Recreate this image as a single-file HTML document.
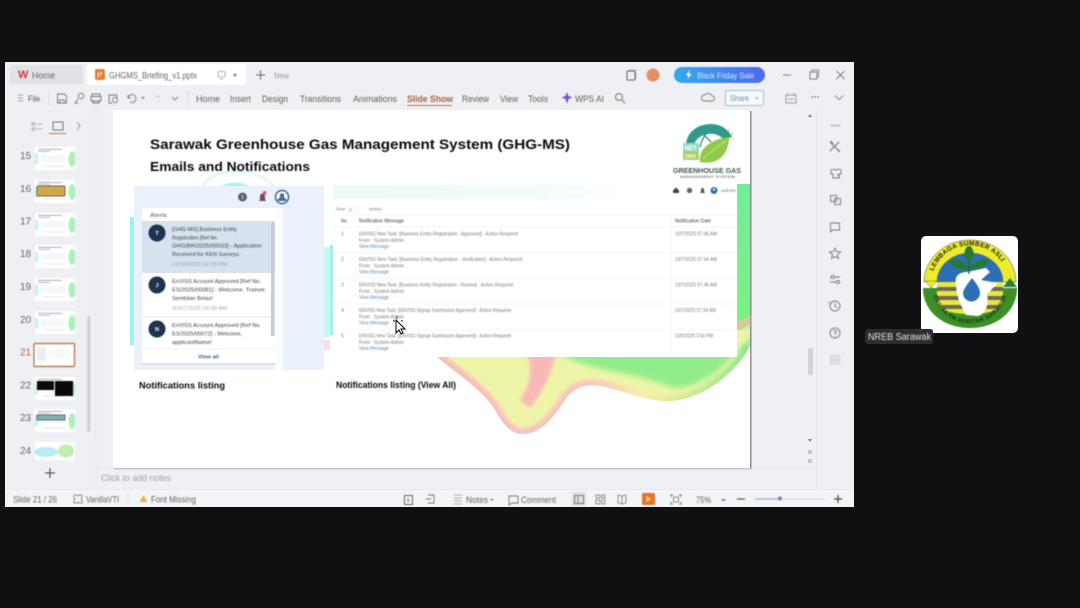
<!DOCTYPE html>
<html><head><meta charset="utf-8"><style>
html,body{margin:0;padding:0;background:#101012;width:1080px;height:608px;overflow:hidden}
svg{display:block;font-family:"Liberation Sans",sans-serif}
.s{filter:blur(.45px)}.b{filter:blur(.6px)}
</style></head><body>
<svg width="1080" height="608" viewBox="0 0 1080 608" xmlns="http://www.w3.org/2000/svg">
<defs>
<linearGradient id="pill" x1="0" x2="1"><stop offset="0" stop-color="#35a7f2"/><stop offset="1" stop-color="#4d6bea"/></linearGradient>
<linearGradient id="edge" gradientUnits="userSpaceOnUse" x1="437" x2="750" y1="0" y2="0"><stop offset="0" stop-color="#f9bcbf"/><stop offset=".5" stop-color="#fac6c0"/><stop offset=".66" stop-color="#f6efaa"/><stop offset=".78" stop-color="#d8eb9a"/><stop offset="1" stop-color="#8ee98e"/></linearGradient>
<linearGradient id="gr" x1="0" x2="0" y1="0" y2="1"><stop offset="0" stop-color="#70ee98"/><stop offset="1" stop-color="#7ff07c"/></linearGradient>
<linearGradient id="mint" x1="0" x2="1"><stop offset="0" stop-color="#eefaf7"/><stop offset=".7" stop-color="#f3fbf9"/><stop offset="1" stop-color="#ffffff"/></linearGradient>
<filter id="bl" x="-20%" y="-20%" width="140%" height="140%"><feGaussianBlur stdDeviation="3"/></filter>
<filter id="bl1" x="-20%" y="-20%" width="140%" height="140%"><feGaussianBlur stdDeviation=".7"/></filter>
<filter id="bl2" x="-20%" y="-20%" width="140%" height="140%"><feGaussianBlur stdDeviation="1.800"/></filter>
<clipPath id="wclip"><path d="M437 357C455 372 485 392 495 410C503 425 512 434 522 434C540 434 552 420 565 400C575 385 590 383 605 387C630 393 650 402 670 401C700 400 735 375 750 346V330H737V357z"/></clipPath>
<symbol id="th" viewBox="0 0 40 23"><rect width="40" height="23" fill="#fff"/><rect x="3" y="2" width="24" height=".8" fill="#99a"/><rect x="3" y="4" width="12" height=".8" fill="#aab"/><ellipse cx="37" cy="12" rx="3.500" ry="8" fill="#aef0bc"/><rect x="6" y="8" width="24" height="7" fill="#f5f8f9"/><ellipse cx="1.500" cy="12" rx="1.800" ry="6" fill="#c4f3f0"/><path d="M8 19h22" stroke="#dde" stroke-width=".7"/></symbol>
<path id="arcT" d="M933 272A39 39 0 0 1 1007 272"/>
<path id="arcB" d="M933 294A38 38 0 0 0 1007 294"/>
</defs>

<rect width="1080" height="608" fill="#101012"/>
<rect x="5" y="62" width="849" height="445" fill="#eef0f4"/>

<!-- title bar -->
<g class="s">
<rect x="10" y="65" width="73" height="19" rx="3" fill="#e0e2e7"/>
<text x="18" y="78" font-size="11" font-weight="bold" fill="#d93a3a">W</text>
<text x="32" y="78.500" font-size="9" fill="#666" textLength="23" lengthAdjust="spacingAndGlyphs">Home</text>
<rect x="87" y="64" width="159" height="21" rx="3" fill="#fff"/>
<rect x="95" y="69" width="10" height="11" rx="2" fill="#e07f33"/><text x="97" y="78" font-size="8" fill="#fff">P</text>
<text x="109" y="78.500" font-size="9" fill="#666" textLength="88" lengthAdjust="spacingAndGlyphs">GHGMS_Briefing_v1.pptx</text>
<rect x="218" y="71.500" width="7" height="5.500" rx="1" fill="none" stroke="#999" stroke-width=".8"/><path d="M220 79h3" stroke="#999" stroke-width=".8"/>
<circle cx="235" cy="75" r="1.500" fill="#888"/>
<path d="M256 75h9M260.500 70.500v9" stroke="#666" stroke-width="1"/>
<text x="274" y="78.500" font-size="8.500" fill="#999" textLength="15" lengthAdjust="spacingAndGlyphs">New</text>
<rect x="627" y="71" width="8" height="9" rx="1" fill="none" stroke="#666" stroke-width="1"/><path d="M629 70h7v9" fill="none" stroke="#aaa" stroke-width=".7"/>
<circle cx="653" cy="75" r="6.500" fill="#e78f62"/>
<rect x="674" y="67" width="91" height="16" rx="8" fill="url(#pill)"/>
<path d="M689.500 70l-3.500 5.500h2.500l-1 4 4-5.500h-2.500z" fill="#fff"/>
<text x="697" y="78.500" font-size="8.500" fill="#d4e6fb" textLength="57" lengthAdjust="spacingAndGlyphs">Black Friday Sale</text>
<path d="M783 75h8" stroke="#777" stroke-width=".9"/>
<rect x="810" y="72" width="7" height="7" fill="none" stroke="#777" stroke-width=".9"/><path d="M812 72v-2h6.500v7h-1.500" fill="none" stroke="#777" stroke-width=".8"/>
<path d="M836.500 71l8 8M844.500 71l-8 8" stroke="#777" stroke-width=".9"/>
</g>

<!-- ribbon -->
<g class="s" fill="#555">
<path d="M18 95h5M18 98h5M18 101h5" stroke="#888" stroke-width=".8"/>
<text x="28" y="101.500" font-size="8.500" textLength="12" lengthAdjust="spacingAndGlyphs">File</text>
<path d="M49 92v14" stroke="#dcdde0"/>
<path d="M57.500 94h7l2 2v7h-9zM59.500 103v-3h5v3" fill="none" stroke="#777" stroke-width=".9"/>
<circle cx="81" cy="96" r="2.800" fill="none" stroke="#777" stroke-width=".9"/><path d="M78 99l-3 4h3" fill="none" stroke="#777" stroke-width=".9"/>
<path d="M92 96v-2h8v2M91 96.500h10v4.500h-10zM93 100v3h6v-3" fill="none" stroke="#777" stroke-width=".9"/>
<path d="M109 95h8v3M109 95v8h3" fill="none" stroke="#777" stroke-width=".9"/><circle cx="115" cy="100" r="2.500" fill="none" stroke="#777" stroke-width=".9"/>
<path d="M128 98a4 4 0 1 1 2 4M128 95v3h3" fill="none" stroke="#777" stroke-width=".9"/><path d="M141 97l2 2 2-2z" fill="#777"/>
<path d="M160 98a3 3 0 0 0-5-1" fill="none" stroke="#c4c4c4"/>
<path d="M172 97l3 3 3-3" fill="none" stroke="#888"/>
<path d="M188 90v15" stroke="#dcdde0"/>
<g font-size="9.500" fill="#5f5f5f">
<text x="196" y="102" textLength="24" lengthAdjust="spacingAndGlyphs">Home</text>
<text x="230" y="102" textLength="21" lengthAdjust="spacingAndGlyphs">Insert</text>
<text x="262" y="102" textLength="26" lengthAdjust="spacingAndGlyphs">Design</text>
<text x="300" y="102" textLength="41" lengthAdjust="spacingAndGlyphs">Transitions</text>
<text x="353" y="102" textLength="44" lengthAdjust="spacingAndGlyphs">Animations</text>
<text x="407" y="102" textLength="46" lengthAdjust="spacingAndGlyphs" font-weight="bold" fill="#a8623c">Slide Show</text>
<text x="462" y="102" textLength="27" lengthAdjust="spacingAndGlyphs">Review</text>
<text x="500" y="102" textLength="18" lengthAdjust="spacingAndGlyphs">View</text>
<text x="528" y="102" textLength="20" lengthAdjust="spacingAndGlyphs">Tools</text>
<text x="575" y="102" textLength="29" lengthAdjust="spacingAndGlyphs">WPS AI</text>
</g>
<rect x="407" y="105" width="45" height="1" fill="#c8764a"/>
<path d="M567 92l1.500 4 4 1.500-4 1.500-1.500 5-1.500-5-4-1.500 4-1.500z" fill="#7a4fd0"/>
<circle cx="619" cy="97" r="3.500" fill="none" stroke="#777"/><path d="M622 100l3 3" stroke="#777"/>
<path d="M704 101h8a2.500 2.500 0 0 0 0-5 4 4 0 0 0-7-1 3 3 0 0 0-1 6z" fill="none" stroke="#777" stroke-width=".9"/>
<rect x="725.500" y="90.500" width="38" height="15" rx="1.500" fill="#f6f8fa" stroke="#9fc3d9"/>
<text x="730" y="101" font-size="8.500" fill="#6a93ad" textLength="19" lengthAdjust="spacingAndGlyphs">Share</text><path d="M755 97.500l2 2 2-2z" fill="#8aa"/>
<rect x="786" y="95" width="10" height="8" fill="none" stroke="#888" stroke-width=".8"/><path d="M788 93v2M794 93v2M788 99h6" stroke="#888" stroke-width=".8"/>
<circle cx="812" cy="97" r=".7"/><circle cx="815" cy="97" r=".7"/><circle cx="818" cy="97" r=".7"/>
<path d="M834.500 95.500l4.500 4 4.500-4" fill="none" stroke="#888"/>
</g>

<!-- panes -->
<path d="M96 108v382M817 108v382" stroke="#e5e6ea" fill="none"/>
<path d="M96 468h721M5 490h849" stroke="#e2e3e7"/>
<rect x="5" y="490" width="849" height="17" fill="#f3f4f7"/>

<!-- left sidebar -->
<g class="s">
<path d="M32 123h3v2h-3zM32 128h3v2h-3zM37 124h5M37 129h5" fill="none" stroke="#999" stroke-width=".8"/>
<rect x="53" y="122" width="10" height="8" fill="none" stroke="#777"/>
<rect x="49" y="133" width="17" height="1" fill="#c8764a"/>
<path d="M77 122l3 4-3 4" fill="none" stroke="#999"/>
<g font-size="10" fill="#666">
<text x="20" y="159">15</text><text x="20" y="192">16</text><text x="20" y="224.500">17</text><text x="20" y="257">18</text><text x="20" y="290">19</text><text x="20" y="323">20</text>
<text x="20" y="355.500" fill="#b0673f">21</text><text x="20" y="388.500">22</text><text x="20" y="421">23</text><text x="20" y="454">24</text>
</g>
<use href="#th" x="35" y="147" width="40" height="23"/>
<use href="#th" x="35" y="180" width="40" height="23"/><rect x="37" y="186" width="28" height="10" rx="1" fill="#cfa84e" stroke="#6a6a4a"/>
<use href="#th" x="35" y="213" width="40" height="23"/>
<use href="#th" x="35" y="245" width="40" height="23"/>
<use href="#th" x="35" y="278" width="40" height="23"/>
<use href="#th" x="35" y="311" width="40" height="23"/>
<rect x="34" y="343.500" width="40.500" height="23" rx="1" fill="#fff" stroke="#c07c50" stroke-width="1.400"/>
<rect x="37" y="347" width="9" height="14" fill="#e6eef8"/><rect x="49" y="348" width="22" height="10" fill="#f7f8f8"/>
<use href="#th" x="35" y="377" width="40" height="23"/><rect x="37" y="381" width="17" height="9" fill="#0a0a0a"/><rect x="55" y="381" width="18" height="15" fill="#0a0a0a"/>
<use href="#th" x="35" y="409" width="40" height="23"/><rect x="37" y="415" width="28" height="5" fill="#7fb5a8" stroke="#667"/>
<rect x="35" y="442" width="40" height="18" fill="#fff"/><ellipse cx="46" cy="452" rx="12" ry="5" fill="#b4eef0"/><ellipse cx="66" cy="451" rx="8" ry="6.500" fill="#bff0ad"/>
<rect x="87" y="316" width="3.500" height="116" rx="1.500" fill="#d2d3d7"/>
<path d="M45 473h10M50 468v10" stroke="#555" stroke-width="1.200"/>
</g>

<!-- notes & status -->
<g class="s">
<text x="101" y="481" font-size="9.500" fill="#a2a2a2" textLength="70" lengthAdjust="spacingAndGlyphs">Click to add notes</text>
<g font-size="9" fill="#666">
<text x="13" y="502.500" textLength="44" lengthAdjust="spacingAndGlyphs">Slide 21 / 26</text>
<text x="86" y="502.500" textLength="33" lengthAdjust="spacingAndGlyphs">VanillaVTI</text>
<text x="151" y="502.500" textLength="45" lengthAdjust="spacingAndGlyphs">Font Missing</text>
<text x="466" y="503" textLength="22" lengthAdjust="spacingAndGlyphs">Notes</text>
<text x="521" y="503" textLength="35" lengthAdjust="spacingAndGlyphs">Comment</text>
<text x="696" y="503" textLength="15" lengthAdjust="spacingAndGlyphs">75%</text>
</g>
<path d="M74 495h3l1 1 1-1h3v3l-1 1 1 1v3h-3l-1-1-1 1h-3v-3l1-1-1-1z" fill="none" stroke="#777" stroke-width=".8"/>
<path d="M128 493v12" stroke="#e6dada"/>
<path d="M143.500 495l4 7h-8z" fill="#e9b44c"/>
<rect x="404.500" y="495.500" width="8" height="9" fill="none" stroke="#666"/><path d="M408 498v3h2" fill="none" stroke="#666" stroke-width=".8"/>
<path d="M428 495h6v8h-6M426 499h5" fill="none" stroke="#777" stroke-width=".9"/>
<path d="M454 495h8M454 498h8M454 501h8M454 504h8" stroke="#999" stroke-width=".7"/><path d="M490 499l2 2 2-2z" fill="#777"/>
<path d="M509 496h9v7h-6l-3 2z" fill="none" stroke="#777" stroke-width=".9"/>
<rect x="572" y="492" width="14" height="14" fill="#e0e1e5"/>
<rect x="574.500" y="495.500" width="9" height="8" fill="none" stroke="#777"/><path d="M578 495v8" stroke="#777" stroke-width=".8"/>
<path d="M596 495h4v3h-4zM602 495h3v3h-3zM596 500h4v4h-4zM602 500h3v4h-3z" fill="none" stroke="#777" stroke-width=".8"/>
<path d="M618 495l4 1 4-1v8l-4 1-4-1zM622 496v8" fill="none" stroke="#777" stroke-width=".8"/>
<rect x="642" y="493" width="13" height="12" rx="1.500" fill="#e8732b"/><path d="M646.500 496l4.500 3-4.500 3z" fill="#ffe28a"/>
<path d="M671 497v-2h2M679 495h2v2M681 502v2h-2M673 504h-2v-2" fill="none" stroke="#777"/><rect x="673.500" y="497" width="5" height="5" fill="none" stroke="#777" stroke-width=".8"/>
<path d="M721 499l2.500 2.500 2.500-2.500z" fill="#777"/>
<path d="M737 499h8" stroke="#555" stroke-width="1.200"/>
<path d="M755 499h70" stroke="#d5d6da"/><path d="M755 499h25" stroke="#8fb1c6" stroke-width="1.200"/><circle cx="780" cy="498.500" r="2" fill="#888"/>
<path d="M834 499h8M838 495v8" stroke="#444" stroke-width="1.200"/>
</g>

<!-- right rail -->
<g class="s" fill="none" stroke="#777" stroke-width=".9">
<path d="M830 125.500h10" stroke="#999"/>
<path d="M830 142l9 9M839 142l-9 9M831 141l2 3M838 152l2-2" stroke-width="1.200"/>
<path d="M831 170l3-1 1 1h2l1-1 3 1v4h-2v4h-6v-4h-2zM837 174l3 4"/>
<rect x="830.500" y="195.500" width="6" height="6"/><rect x="834.500" y="198.500" width="6" height="6"/>
<path d="M830.500 223h9v7h-7l-2 2z"/>
<path d="M835 248l1.500 3.500 4 .5-3 2.500 1 4-3.500-2-3.500 2 1-4-3-2.500 4-.5z"/>
<path d="M830 277h10M830 282h10"/><circle cx="833" cy="277" r="1.600" fill="#eef0f4"/><circle cx="838" cy="282" r="1.600" fill="#eef0f4"/>
<circle cx="835" cy="306" r="5"/><path d="M835 303v3l2 2M830 303l-1.500-1"/>
<circle cx="835" cy="333" r="5"/><path d="M833.500 331.500a1.500 1.500 0 1 1 1.500 2v1M835 336v.6"/>
<g stroke="#c8c9ce"><rect x="830.500" y="355.500" width="3.500" height="3.500"/><rect x="836" y="355.500" width="3.500" height="3.500"/><rect x="830.500" y="360.500" width="3.500" height="3.500"/><rect x="836" y="360.500" width="3.500" height="3.500"/></g>
</g>
<rect x="808" y="348" width="5" height="27" rx="2" fill="#d2d3d7"/>
<path d="M810 114l2 3h-4zM810 442l2-3h-4z" fill="#888"/><path d="M808 451h4M808 453h4M808 460h4M808 462h4" stroke="#888" stroke-width=".8"/>

<!-- slide -->
<rect x="750" y="111" width="1.500" height="358" fill="#8d8d8d"/>
<rect x="114" y="468" width="637" height="1.500" fill="#c6c6c6"/>
<rect x="113" y="110" width="637" height="358" fill="#fff"/>

<!-- decorations -->
<g>
<path d="M202 188C210 166 262 166 274 188" fill="none" stroke="#d8f9f7" stroke-width="2.500" filter="url(#bl1)"/>
<path d="M218 188C226 181 244 181 252 188z" fill="#a6f2f2" filter="url(#bl1)"/>
<rect x="130" y="217" width="4.500" height="128" fill="#9af3ee"/>
<rect x="324" y="247" width="6" height="90" fill="#c6f7f2"/>
<rect x="324" y="340" width="6" height="10" fill="#fadde2"/>
<rect x="330" y="245" width="3" height="90" fill="#a0f3ee"/>
<path d="M720 184h30v150l-13 24h-17z" fill="url(#gr)"/>
<path d="M737 322L750 316V324L737 332z" fill="#d9c99c" filter="url(#bl1)"/>
<path d="M737 332L750 324V346L737 360z" fill="#d7ee92"/>
<g clip-path="url(#wclip)">
<rect x="430" y="325" width="325" height="115" fill="#eff5a8"/>
<path d="M558 352C585 372 640 372 672 388C700 390 725 368 752 335V352z" fill="#93ec8c" filter="url(#bl)"/>
<path d="M526 352L556 352C552 375 542 392 530 408L520 400C530 385 534 370 526 352z" fill="#f8b8b8" filter="url(#bl2)"/>
<path d="M437 357C455 372 485 392 495 410C503 425 512 434 522 434C540 434 552 420 565 400C575 385 590 383 605 387C630 393 650 402 670 401C700 400 735 375 750 346" fill="none" stroke="url(#edge)" stroke-width="12" filter="url(#bl2)"/>
</g>
</g>

<!-- left panel -->
<rect x="134" y="186" width="190" height="184" fill="#ebf1fb"/>
<path d="M275 208h8v162h-8z" fill="#fafcff"/>
<g class="s">
<circle cx="242.500" cy="197" r="4.500" fill="#5a6470"/><rect x="242" y="195" width="1" height="4" fill="#ddd"/>
<path d="M259 201h7l-1-2v-3a2.500 2.500 0 0 0-5 0v3z" fill="#6d4a5f"/><circle cx="264.500" cy="193" r="2" fill="#e25b72"/>
<circle cx="282" cy="197" r="6.500" fill="#fff" stroke="#2d6a94" stroke-width="1.500"/><circle cx="282" cy="195.500" r="2.300" fill="#4a6f8c"/><path d="M277.500 201a4.500 4 0 0 1 9 0z" fill="#4a6f8c"/>
</g>
<rect x="142" y="208" width="133" height="156" fill="#fff"/>
<rect x="141" y="363" width="135" height="2" fill="#dfe3ea"/>
<rect x="142" y="221" width="133" height="52" fill="#d7e2ee"/>
<path d="M142 317h133" stroke="#e5e6ea"/>
<path d="M142 349h133" stroke="#eef0f2"/>
<rect x="271" y="222" width="3.500" height="114" fill="#c4cdd8"/>
<g class="b">
<circle cx="157" cy="233" r="8.500" fill="#1f3350"/><circle cx="157" cy="285" r="8.500" fill="#1f3350"/><circle cx="157" cy="329" r="8.500" fill="#1f3350"/>
<g font-size="5.500" fill="#fff" font-weight="bold" text-anchor="middle"><text x="157" y="235">T</text><text x="157" y="287">J</text><text x="157" y="331">N</text></g>
<g font-size="5.800" fill="#444">
<text x="150" y="217" fill="#555" textLength="17" lengthAdjust="spacingAndGlyphs">Alerts</text>
<text x="172" y="231" textLength="65" lengthAdjust="spacingAndGlyphs">[GHG-MS] Business Entity</text>
<text x="172" y="239.500" textLength="46" lengthAdjust="spacingAndGlyphs">Registration [Ref No.</text>
<text x="172" y="247.500" textLength="90" lengthAdjust="spacingAndGlyphs">GHG/BR/2025/00033] - Application</text>
<text x="172" y="256" textLength="67" lengthAdjust="spacingAndGlyphs">Received for KKN Surveys</text>
<text x="172" y="266" fill="#98a3ad" textLength="55" lengthAdjust="spacingAndGlyphs">21/10/2025 02:19 PM</text>
<text x="172" y="283" textLength="89" lengthAdjust="spacingAndGlyphs">EnVISS Account Approved [Ref No.</text>
<text x="172" y="291.500" textLength="93" lengthAdjust="spacingAndGlyphs">ES/2025/00081] - Welcome, Trainee</text>
<text x="172" y="300" textLength="41" lengthAdjust="spacingAndGlyphs">Sembilan Belas!</text>
<text x="172" y="310" fill="#a5adb5" textLength="55" lengthAdjust="spacingAndGlyphs">30/07/2025 09:09 AM</text>
<text x="172" y="327" textLength="89" lengthAdjust="spacingAndGlyphs">EnVISS Account Approved [Ref No.</text>
<text x="172" y="335.500" textLength="70" lengthAdjust="spacingAndGlyphs">ES/2025/00072] - Welcome,</text>
<text x="172" y="344" textLength="40" lengthAdjust="spacingAndGlyphs">applicantName!</text>
<text x="198" y="358.500" fill="#3d6d96" font-weight="bold" textLength="21" lengthAdjust="spacingAndGlyphs">View all</text>
</g>
</g>

<!-- right table -->
<rect x="333" y="183" width="404" height="174" fill="#fff"/>
<rect x="333" y="185" width="290" height="14" fill="url(#mint)"/>
<path d="M333 215h404M333 227h404M333 253h404M333 278.500h404M333 304h404M333 330h404M671 215v141" stroke="#f2f3f4" stroke-width=".8"/>
<g class="s">
<path d="M673 190.500l3-3 3 3v2.500h-6z" fill="#444"/>
<circle cx="689.500" cy="190.500" r="2.700" fill="#666"/>
<path d="M700 193h5l-1-1.500v-2a1.500 1.500 0 0 0-3 0v2z" fill="#555"/>
<circle cx="714" cy="190.500" r="3.500" fill="#2d6fb0"/><circle cx="714" cy="189.500" r="1.100" fill="#fff"/>
</g>
<g class="b" font-size="5.200" fill="#7d7d7d">
<text x="721" y="192" font-size="4.500" textLength="15" lengthAdjust="spacingAndGlyphs">admin</text>
<text x="336" y="210.500" font-size="4.500" textLength="9" lengthAdjust="spacingAndGlyphs">Show</text>
<rect x="347" y="207" width="11" height="5" fill="none" stroke="#ddd" stroke-width=".5"/>
<text x="349" y="211" font-size="4" textLength="3">10</text>
<text x="369" y="210.500" font-size="4.500" textLength="13" lengthAdjust="spacingAndGlyphs">entries</text>
<text x="341" y="222.500" fill="#444" textLength="7" lengthAdjust="spacingAndGlyphs">No.</text>
<text x="359" y="222.500" fill="#444" textLength="45" lengthAdjust="spacingAndGlyphs">Notification Message</text>
<text x="675" y="222.500" fill="#444" textLength="36" lengthAdjust="spacingAndGlyphs">Notification Date</text>

<text x="341" y="235.500">1</text>
<text x="359" y="235.500" textLength="159" lengthAdjust="spacingAndGlyphs">ENVISS New Task: [Business Entity Registration - Approved] - Action Required</text>
<text x="359" y="242" textLength="45" lengthAdjust="spacingAndGlyphs">From : System Admin</text>
<text x="359" y="248" fill="#5b8cc0" textLength="30" lengthAdjust="spacingAndGlyphs">View Message</text>
<text x="675" y="235.500" textLength="42" lengthAdjust="spacingAndGlyphs">10/7/2025 07:49 AM</text>

<text x="341" y="261">2</text>
<text x="359" y="261" textLength="163" lengthAdjust="spacingAndGlyphs">ENVISS New Task: [Business Entity Registration - Verification] - Action Required</text>
<text x="359" y="267.500" textLength="45" lengthAdjust="spacingAndGlyphs">From : System Admin</text>
<text x="359" y="273.500" fill="#5b8cc0" textLength="30" lengthAdjust="spacingAndGlyphs">View Message</text>
<text x="675" y="261" textLength="42" lengthAdjust="spacingAndGlyphs">10/7/2025 07:44 AM</text>

<text x="341" y="286.500">3</text>
<text x="359" y="286.500" textLength="154" lengthAdjust="spacingAndGlyphs">ENVISS New Task: [Business Entity Registration - Review] - Action Required</text>
<text x="359" y="293" textLength="45" lengthAdjust="spacingAndGlyphs">From : System Admin</text>
<text x="359" y="299" fill="#5b8cc0" textLength="30" lengthAdjust="spacingAndGlyphs">View Message</text>
<text x="675" y="286.500" textLength="42" lengthAdjust="spacingAndGlyphs">10/7/2025 07:46 AM</text>

<text x="341" y="312">4</text>
<text x="359" y="312" textLength="152" lengthAdjust="spacingAndGlyphs">ENVISS New Task: [ENVISS Signup Submission Approved] - Action Required</text>
<text x="359" y="318.500" textLength="45" lengthAdjust="spacingAndGlyphs">From : System Admin</text>
<text x="359" y="324.500" fill="#5b8cc0" textLength="30" lengthAdjust="spacingAndGlyphs">View Message</text>
<text x="675" y="312" textLength="41" lengthAdjust="spacingAndGlyphs">10/7/2025 07:34 AM</text>

<text x="341" y="337.500">5</text>
<text x="359" y="337.500" textLength="152" lengthAdjust="spacingAndGlyphs">ENVISS New Task: [ENVISS Signup Submission Approved] - Action Required</text>
<text x="359" y="344" textLength="45" lengthAdjust="spacingAndGlyphs">From : System Admin</text>
<text x="359" y="350" fill="#5b8cc0" textLength="30" lengthAdjust="spacingAndGlyphs">View Message</text>
<text x="675" y="337.500" textLength="38" lengthAdjust="spacingAndGlyphs">10/5/2025 3:56 PM</text>
</g>

<!-- cursor -->
<path d="M396 320v13l3-3 2 4 2-1-2-4h4z" fill="#fff" stroke="#000" stroke-width="1"/>
<path d="M397 318.500v-2M393 321h2M401 321h2" stroke="#111" stroke-width="1"/>

<!-- titles -->
<g class="s" font-weight="bold" fill="#0a0a0a">
<text x="150" y="149" font-size="14" textLength="420" lengthAdjust="spacingAndGlyphs">Sarawak Greenhouse Gas Management System (GHG-MS)</text>
<text x="150" y="171" font-size="12.500" textLength="160" lengthAdjust="spacingAndGlyphs">Emails and Notifications</text>
<text x="139" y="388.500" font-size="9" textLength="86" lengthAdjust="spacingAndGlyphs">Notifications listing</text>
<text x="336" y="388" font-size="9" textLength="120" lengthAdjust="spacingAndGlyphs">Notifications listing (View All)</text>
</g>

<!-- slide logo -->
<g class="s">
<path d="M686 146C686 132 698 124 711 124C721 124 729 130 732 137L724 140C720 135 714 133 708 134C700 135 695 140 693 147z" fill="#2f9a8c"/>
<path d="M692 140C698 132 710 128 722 131M700 147C702 138 708 130 714 125M697 128l14 14" fill="none" stroke="#2f9a8c" stroke-width="1.400"/>
<rect x="683" y="143" width="16" height="17" fill="#8fdcc0"/>
<text x="684.500" y="150" font-size="6" fill="#fff" font-weight="bold">NET</text>
<rect x="684" y="152" width="14" height="7" fill="#b2c948"/><text x="685" y="158" font-size="5" fill="#fff" font-weight="bold">2050</text>
<path d="M700 162C698 148 712 139 729 137C729 152 720 166 700 162z" fill="#92c947"/>
<path d="M703 159C710 152 718 147 726 141" stroke="#d5ea9c" stroke-width=".8" fill="none"/>
<circle cx="729" cy="130" r="1" fill="#dcc96a"/><circle cx="732" cy="134" r="1" fill="#dcc96a"/><circle cx="733" cy="139" r="1" fill="#c8d47a"/>
<text x="673" y="173" font-size="7" font-weight="bold" fill="#3b5a55" textLength="68" lengthAdjust="spacingAndGlyphs">GREENHOUSE GAS</text>
<text x="680" y="178" font-size="4" fill="#556" textLength="55" lengthAdjust="spacingAndGlyphs">MANAGEMENT SYSTEM</text>
</g>

<!-- participant tile -->
<rect x="921" y="236" width="97" height="97" rx="5" fill="#fff"/>
<g class="s">
<path d="M923 288H1017C1017 312 996 328 970 328C944 328 923 312 923 288z" fill="#3b8f26"/>
<path d="M924 282A46 42 0 0 1 1016 282H1003A33 29 0 0 0 937 282z" fill="#ecec2c" stroke="#444" stroke-width=".5"/>
<path d="M937 282A33 29 0 0 1 1003 282z" fill="#2c6fb5"/>
<path d="M925 281h12l-6 7z" fill="#ecec2c" stroke="#444" stroke-width=".4"/>
<path d="M1003 287l7-9 7 9z" fill="#2f7a3a"/>
<path d="M937 282H1003V302C1000 310 990 314 970 314C950 314 940 310 937 302z" fill="#e8e83a"/>
<g fill="#6b6b58"><rect x="937" y="287" width="66" height="4"/><rect x="937" y="296" width="66" height="4"/><rect x="941" y="305" width="58" height="4"/></g>
<path d="M956 283C954 276 960 272 967 272L986 268L990 272L981 280L998 283L987 294C989 304 986 314 978 316L966 315C961 306 956 296 956 283z" fill="#fff"/>
<path d="M972 278C966 286 963 290 963 293A8.500 8.500 0 0 0 980 293C980 289 977 284 972 278z" fill="#2c6fb5"/>
<path d="M969 246v28" stroke="#1f5e2a" stroke-width="1.300"/>
<ellipse cx="969" cy="254" rx="4.500" ry="8" fill="#247a32"/>
<path d="M969 270C958 270 950 266 949 260C960 258 967 263 969 270zM969 270C980 270 988 266 989 260C978 258 971 263 969 270z" fill="#247a32"/>
<text font-size="6.500" font-weight="bold" fill="#222" letter-spacing=".3"><textPath href="#arcT" startOffset="1%">LEMBAGA SUMBER ASLI</textPath></text>
<text font-size="5.800" font-weight="bold" fill="#12301a" letter-spacing=".4"><textPath href="#arcB" startOffset="2%">DAN ALAM SEKITAR SARAWAK</textPath></text>
</g>
<rect x="865" y="329" width="68" height="15" rx="2.500" fill="#2c2c2e"/>
<text x="868" y="340" font-size="10" fill="#e2e2e2" class="s" textLength="63" lengthAdjust="spacingAndGlyphs">NREB Sarawak</text>
</svg>
</body></html>
